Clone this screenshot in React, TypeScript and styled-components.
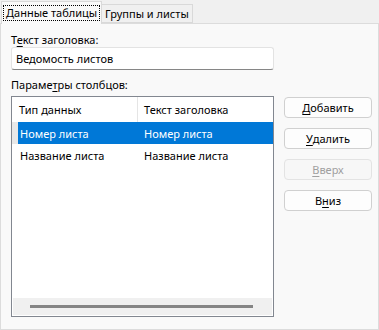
import React from "react";
import styled, { createGlobalStyle } from "styled-components";

const Global = createGlobalStyle`
  html, body { margin: 0; padding: 0; background: #f0f0f0; }
  body { font-family: "Noto Sans", "Segoe UI", sans-serif; font-size: 11px; color: #000; }
  * { box-sizing: border-box; }
`;

const Window = styled.div`
  width: 379px;
  height: 330px;
  display: flex;
  flex-direction: column;
  background: #f0f0f0;
`;

const TabStrip = styled.div`
  height: 23px;
  display: flex;
  align-items: flex-end;
  padding-left: 1px;
  position: relative;
  z-index: 1;
`;

const Tab = styled.div<{ $active?: boolean }>`
  height: ${(p) => (p.$active ? "23px" : "19px")};
  margin-bottom: ${(p) => (p.$active ? "-1px" : "0")};
  padding: ${(p) => (p.$active ? "0 1px" : "0 3px 0 3px")};
  display: flex;
  align-items: center;
  background: ${(p) => (p.$active ? "#f9f9f9" : "#f0f0f0")};
  border: 1px solid #d9d9d9;
  border-bottom: ${(p) => (p.$active ? "none" : "1px solid #d9d9d9")};
  border-left: ${(p) => (p.$active ? "1px solid #d9d9d9" : "none")};
  line-height: 15px;
  white-space: nowrap;
`;

const FocusRect = styled.span`
  border: 1px dotted #000;
  padding: 0 2px;
  line-height: 14px;
`;

const Panel = styled.div`
  flex: 1;
  background: #f9f9f9;
  border: 1px solid #dcdcdc;
  padding: 8px 0 0 10px;
  display: flex;
  flex-direction: column;
`;

const Label = styled.div<{ $gap?: number }>`
  line-height: 15px;
  height: 15px;
  margin-top: ${(p) => p.$gap ?? 0}px;
  margin-bottom: ${(p) => (p.$gap ? 4 : 0)}px;
`;

const Input = styled.div`
  width: 263px;
  height: 23px;
  background: #fff;
  border: 1px solid #e3e3e3;
  border-bottom: 1px solid #868686;
  border-radius: 3px;
  padding-left: 4px;
  display: flex;
  align-items: center;
  line-height: 15px;
`;

const Body = styled.div`
  display: flex;
  gap: 10px;
`;

const ListBox = styled.div`
  width: 263px;
  height: 221px;
  border: 1px solid #828790;
  background: #fff;
  display: flex;
  flex-direction: column;
`;

const Header = styled.div`
  height: 25px;
  display: grid;
  grid-template-columns: 125px 1fr;
  line-height: 15px;
`;

const HeaderCell = styled.div<{ $sep?: boolean }>`
  display: flex;
  align-items: center;
  padding-left: ${(p) => (p.$sep ? "6px" : "7px")};
  border-left: ${(p) => (p.$sep ? "1px solid #e5e5e5" : "none")};
`;

const Row = styled.div<{ $selected?: boolean }>`
  height: 22px;
  margin-left: ${(p) => (p.$selected ? "0" : "6px")};
  border-left: ${(p) => (p.$selected ? "6px solid #e8e8e8" : "none")};
  display: grid;
  grid-template-columns: 124px 1fr;
  align-items: center;
  background: ${(p) => (p.$selected ? "#0078d7" : "transparent")};
  color: ${(p) => (p.$selected ? "#fff" : "#000")};
  line-height: 15px;
`;

const Cell = styled.div`
  padding-left: 2px;
  white-space: nowrap;
`;

const Spacer = styled.div`
  flex: 1;
`;

const HScroll = styled.div`
  height: 17px;
  margin: 0 1px 1px 1px;
  background: #f0f0f0;
  display: flex;
  align-items: center;
  padding: 0 19px 0 17px;
`;

const Thumb = styled.div`
  height: 3px;
  flex: 1;
  background: #858585;
`;

const Buttons = styled.div`
  padding-top: 1px;
  display: flex;
  flex-direction: column;
  gap: 10px;
`;

const Button = styled.div<{ $disabled?: boolean }>`
  width: 88px;
  height: 21px;
  border: 1px solid ${(p) => (p.$disabled ? "#e3e3e3" : "#d0d0d0")};
  border-radius: 4px;
  background: ${(p) => (p.$disabled ? "#f7f7f7" : "#fdfdfd")};
  color: ${(p) => (p.$disabled ? "#a0a0a0" : "#000")};
  display: flex;
  align-items: center;
  justify-content: center;
  line-height: 15px;
`;

const U = styled.span`
  text-decoration: underline;
  text-underline-offset: 2px;
`;

export default function App() {
  return (
    <>
      <Global />
      <Window>
        <TabStrip>
          <Tab $active>
            <FocusRect>Данные таблицы</FocusRect>
          </Tab>
          <Tab>Группы и листы</Tab>
        </TabStrip>
        <Panel>
          <Label>
            Т<U>е</U>кст заголовка:
          </Label>
          <Input>Ведомость листов</Input>
          <Label $gap={7}>
            Параме<U>т</U>ры столбцов:
          </Label>
          <Body>
            <ListBox>
              <Header>
                <HeaderCell>Тип данных</HeaderCell>
                <HeaderCell $sep>Текст заголовка</HeaderCell>
              </Header>
              <Row $selected>
                <Cell>Номер листа</Cell>
                <Cell>Номер листа</Cell>
              </Row>
              <Row>
                <Cell>Название листа</Cell>
                <Cell>Название листа</Cell>
              </Row>
              <Spacer />
              <HScroll>
                <Thumb />
              </HScroll>
            </ListBox>
            <Buttons>
              <Button>
                <U>Д</U>обавить
              </Button>
              <Button>
                <U>У</U>далить
              </Button>
              <Button $disabled>
                <U>В</U>верх
              </Button>
              <Button>
                В<U>н</U>из
              </Button>
            </Buttons>
          </Body>
        </Panel>
      </Window>
    </>
  );
}
